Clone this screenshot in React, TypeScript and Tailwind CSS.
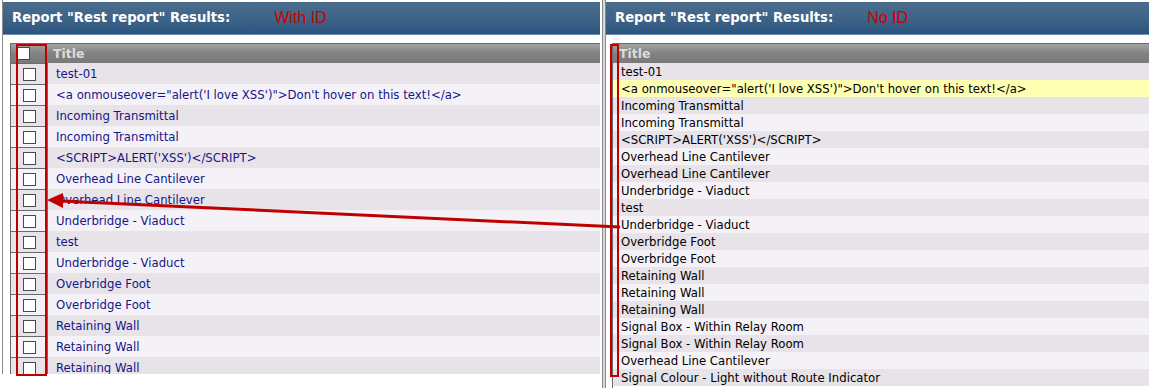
const leftRows = [
  "test-01",
  "<a onmouseover=\"alert('I love XSS')\">Don't hover on this text!</a>",
  "Incoming Transmittal",
  "Incoming Transmittal",
  "<SCRIPT>ALERT('XSS')</SCRIPT>",
  "Overhead Line Cantilever",
  "Overhead Line Cantilever",
  "Underbridge - Viaduct",
  "test",
  "Underbridge - Viaduct",
  "Overbridge Foot",
  "Overbridge Foot",
  "Retaining Wall",
  "Retaining Wall",
  "Retaining Wall",
];

const rightRows = [
  "test-01",
  "<a onmouseover=\"alert('I love XSS')\">Don't hover on this text!</a>",
  "Incoming Transmittal",
  "Incoming Transmittal",
  "<SCRIPT>ALERT('XSS')</SCRIPT>",
  "Overhead Line Cantilever",
  "Overhead Line Cantilever",
  "Underbridge - Viaduct",
  "test",
  "Underbridge - Viaduct",
  "Overbridge Foot",
  "Overbridge Foot",
  "Retaining Wall",
  "Retaining Wall",
  "Retaining Wall",
  "Signal Box - Within Relay Room",
  "Signal Box - Within Relay Room",
  "Overhead Line Cantilever",
  "Signal Colour - Light without Route Indicator",
];

const font = { fontFamily: "Tahoma, 'DejaVu Sans', sans-serif" };

function Checkbox() {
  return <span className="block h-[13px] w-[13px] border border-[#4a4a4a] bg-white" />;
}

function PanelHeader({ note, gap }: { note: string; gap: string }) {
  return (
    <div className="flex h-[33px] items-center border-b border-[#6f8dab] bg-gradient-to-b from-[#4b6d8d] via-[#3f6488] to-[#2b5580] pl-[9px]">
      <span className="text-[13.2px] font-bold text-white">Report "Rest report" Results:</span>
      <span
        className={`${gap} text-[16px] text-[#cc0000]`}
        style={{ fontFamily: "'Liberation Sans', Arial, sans-serif" }}
      >
        {note}
      </span>
    </div>
  );
}

export default function App() {
  return (
    <div className="relative flex h-[388px] w-[1149px] overflow-hidden bg-white text-[11.7px]" style={font}>
      {/* left: with ID */}
      <div className="ml-[2px] flex h-[374px] w-[598px] flex-col border-l border-[#8c8c8c] pt-[2px]">
        <PanelHeader note="With ID" gap="ml-[44px]" />
        <div className="mt-[8px] ml-[7px] flex flex-1 flex-col overflow-hidden border-t border-l border-[#6b6b6b]">
          <div className="flex h-[19px] bg-gradient-to-b from-[#a3a3a3] via-[#838282] to-[#7a7879]">
            <div className="flex w-[37px] items-center pl-[6px]">
              <Checkbox />
            </div>
            <div className="pl-[5px] text-[12.5px] font-bold leading-[19px] text-[#dcdcdc]">Title</div>
          </div>
          {leftRows.map((r, i) => (
            <div key={i} className={`flex h-[21px] shrink-0 ${i % 2 === 0 ? "bg-[#e7e3e8]" : "bg-[#f5f2f7]"}`}>
              <div className="flex w-[37px] items-center justify-center border-t border-r border-[#6b6b6b]">
                <Checkbox />
              </div>
              <div className="pl-[8px] leading-[22px] text-[#15158a]">{r}</div>
            </div>
          ))}
        </div>
      </div>

      {/* divider */}
      <div className="ml-[2px] h-full w-[4px] border-x border-[#8a8a8a] bg-[#d8d8d8]" />

      {/* right: no ID */}
      <div className="flex h-full flex-1 flex-col pt-[2px]">
        <PanelHeader note="No ID" gap="ml-[34px]" />
        <div className="mt-[8px] ml-[6px] flex flex-1 flex-col border-t border-l border-[#6b6b6b]">
          <div className="h-[19px] bg-gradient-to-b from-[#a3a3a3] via-[#838282] to-[#7a7879] pl-[6px] text-[12.5px] font-bold leading-[19px] text-[#dcdcdc]">
            Title
          </div>
          {rightRows.map((r, i) => (
            <div
              key={i}
              className={`h-[17px] shrink-0 pl-[8px] leading-[18px] text-black ${
                i === 1 ? "bg-[#ffffb4]" : i % 2 === 0 ? "bg-[#e7e3e8]" : "bg-[#f5f2f7]"
              }`}
            >
              {r}
            </div>
          ))}
        </div>
      </div>

      {/* annotations */}
      <svg className="pointer-events-none absolute inset-0" width="1149" height="388">
        <rect x="17" y="45" width="29" height="330" fill="none" stroke="#c00000" strokeWidth="2" />
        <rect x="611" y="45" width="7" height="331" fill="none" stroke="#c00000" strokeWidth="2" />
        <line x1="620" y1="227" x2="60" y2="201" stroke="#c00000" strokeWidth="3" />
        <polygon points="47,200 63,193 63,208" fill="#c00000" />
      </svg>
    </div>
  );
}
